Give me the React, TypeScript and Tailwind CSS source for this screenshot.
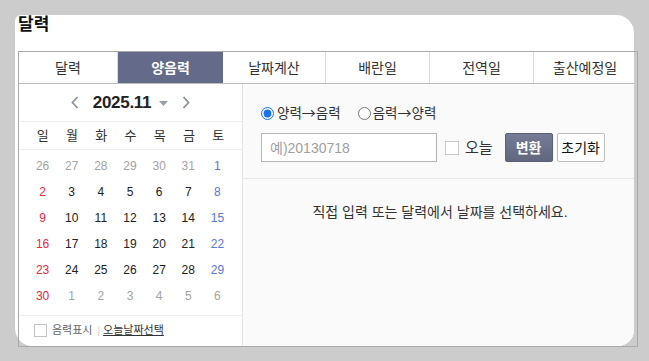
const tabs = ['달력', '양음력', '날짜계산', '배란일', '전역일', '출산예정일'];
const tabWidths = ['w-[99px]', 'w-[105px]', 'w-[103px]', 'w-[104px]', 'w-[104px]', 'flex-1'];
const weekdays = ['일', '월', '화', '수', '목', '금', '토'];

// [day, inMonth]
const weeks: [number, boolean][][] = [
  [[26, false], [27, false], [28, false], [29, false], [30, false], [31, false], [1, true]],
  [[2, true], [3, true], [4, true], [5, true], [6, true], [7, true], [8, true]],
  [[9, true], [10, true], [11, true], [12, true], [13, true], [14, true], [15, true]],
  [[16, true], [17, true], [18, true], [19, true], [20, true], [21, true], [22, true]],
  [[23, true], [24, true], [25, true], [26, true], [27, true], [28, true], [29, true]],
  [[30, true], [1, false], [2, false], [3, false], [4, false], [5, false], [6, false]],
];

function dayColor(col: number, inMonth: boolean) {
  if (!inMonth) return 'text-[#a3a3a3]';
  if (col === 0) return 'text-[#e8283c]';
  if (col === 6) return 'text-[#5677d6]';
  return 'text-[#222]';
}

function Chevron({ dir }: { dir: 'left' | 'right' }) {
  return (
    <svg width="8" height="13" viewBox="0 0 8 13" fill="none" stroke="#8a8fa3" strokeWidth="1.8">
      {dir === 'left' ? <path d="M6.5 1 1.5 6.5l5 5.5" /> : <path d="M1.5 1l5 5.5-5 5.5" />}
    </svg>
  );
}

function Arrow() {
  return <span className="font-['Noto_Sans_CJK_KR',sans-serif] text-[14px]">→</span>;
}

export default function App() {
  return (
    <div className="relative w-[649px] h-[361px] bg-[#cccccc] overflow-hidden font-['Liberation_Sans','Noto_Sans_CJK_KR',sans-serif]">
      <div className="ml-[15px] mt-[15px] w-[619px] h-[331px] bg-white rounded-tl-[6px] rounded-tr-[18px] rounded-bl-[18px] rounded-br-[16px] overflow-hidden flex flex-col">
        {/* Title */}
        <div className="h-[36px] pl-[3px] pt-[1px] text-[17px] leading-[18px] font-bold text-[#111]">달력</div>

        <div className="ml-[3px] w-[619px] flex-1 flex flex-col border-t border-l border-[#a9a9a9]">
          {/* Tabs */}
          <div className="flex h-[32px] border-b border-[#bdbdbd]">
            {tabs.map((t, i) => (
              <div
                key={t}
                className={`${tabWidths[i]} flex items-center justify-center text-[14px] leading-[16px] ${
                  i === 1 ? 'bg-[#646b8a] text-white font-bold' : 'text-[#333] border-r border-[#dcdcdc]'
                }`}
              >
                {t}
              </div>
            ))}
          </div>

          <div className="flex flex-1">
            {/* Calendar */}
            <div className="w-[224px] border-r border-[#e3e3e3] flex flex-col bg-white">
              <div className="h-[38px] border-b border-[#eeeeee] flex items-center justify-center">
                <Chevron dir="left" />
                <span className="ml-[14px] text-[17px] leading-[20px] font-bold text-[#222] tracking-[-0.3px]">2025.11</span>
                <svg className="ml-[8px] mt-[1px]" width="9" height="5" viewBox="0 0 9 5">
                  <path d="M0 0h9L4.5 5z" fill="#9a9eae" />
                </svg>
                <span className="ml-[14px]"><Chevron dir="right" /></span>
              </div>
              <div className="px-[9px]">
                <div className="h-[28px] grid grid-cols-7 border-b border-[#eeeeee] -mx-[9px] px-[9px]">
                  {weekdays.map((w) => (
                    <div key={w} className="flex items-center justify-center text-[13px] leading-[16px] text-[#333]">
                      {w}
                    </div>
                  ))}
                </div>
                <div className="pt-[3px] pb-[6px] w-[204px]">
                  {weeks.map((wk, r) => (
                    <div key={r} className="grid grid-cols-7 h-[26px]">
                      {wk.map(([d, inMonth], c) => (
                        <div
                          key={c}
                          className={`flex items-center justify-center text-[12px] leading-[14px] ${dayColor(c, inMonth)}`}
                        >
                          {d}
                        </div>
                      ))}
                    </div>
                  ))}
                </div>
              </div>
              <div className="flex-1 border-t border-[#eeeeee] flex items-start pt-[8px] pl-[15px]">
                <span className="w-[13px] h-[13px] border border-[#c2c2c2] bg-white" />
                <span className="ml-[5px] text-[11px] leading-[13px] text-[#666]">음력표시</span>
                <span className="ml-[5px] text-[10px] leading-[13px] text-[#d0d0d0]">|</span>
                <span className="ml-[3px] text-[11px] leading-[13px] text-[#333] underline">오늘날짜선택</span>
              </div>
            </div>

            {/* Converter */}
            <div className="flex-1 bg-[#fafafa] flex flex-col">
              <div className="pl-[18px] pt-[20px] pb-[16px] border-b border-[#e8e8e8]">
                <div className="flex items-center h-[18px] text-[13.5px] leading-[16px] text-[#333]">
                  <input type="radio" name="mode" defaultChecked className="m-0 w-[13px] h-[13px] accent-[#1a73e8]" />
                  <span className="ml-[3px]">양력<Arrow />음력</span>
                  <input type="radio" name="mode" className="m-0 ml-[17px] w-[13px] h-[13px]" />
                  <span className="ml-[2px]">음력<Arrow />양력</span>
                </div>
                <div className="mt-[11px] flex items-center h-[29px]">
                  <input
                    placeholder="예)20130718"
                    className="w-[176px] h-[29px] border border-[#b5b5b5] bg-white px-[8px] text-[14px] text-[#333] placeholder:text-[#a0a0a0] outline-none"
                  />
                  <span className="ml-[8px] w-[14px] h-[14px] border border-[#c8c8c8] bg-white" />
                  <span className="ml-[6px] text-[15px] leading-[18px] text-[#333]">오늘</span>
                  <button className="ml-[12px] w-[48px] h-[29px] rounded-[2px] bg-gradient-to-b from-[#757a98] to-[#62677f] border border-[#5a5f78] text-white text-[14px] font-bold leading-[16px]">
                    변환
                  </button>
                  <button className="ml-[4px] w-[48px] h-[29px] rounded-[2px] bg-white border border-[#bdbdbd] text-[#111] text-[14px] leading-[16px]">
                    초기화
                  </button>
                </div>
              </div>
              <div className="pt-[23px] text-center text-[14px] leading-[20px] text-[#333]">
                직접 입력 또는 달력에서 날짜를 선택하세요.
              </div>
            </div>
          </div>
        </div>
      </div>
      {/* outer frame of the widget */}
      <div className="absolute left-[18px] top-[51px] w-[620px] h-[296px] border border-[#a9a9a9] pointer-events-none" />
    </div>
  );
}
